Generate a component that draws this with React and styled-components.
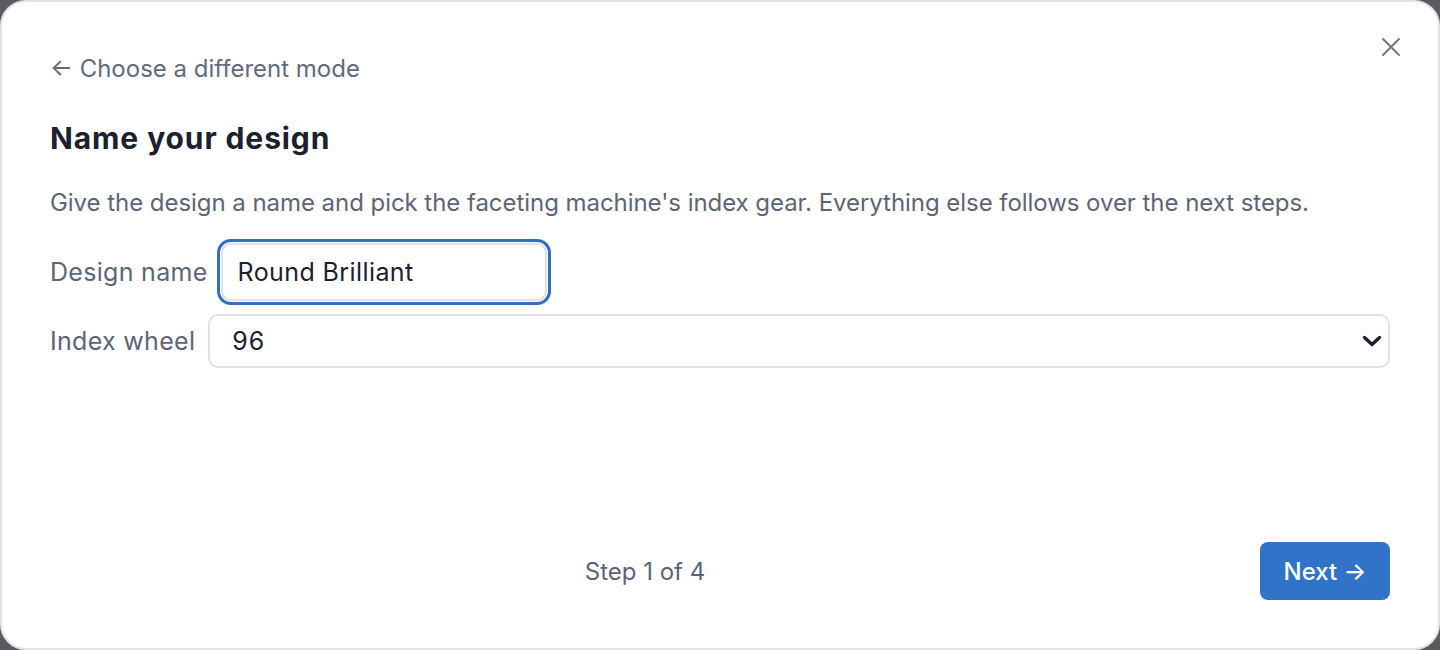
import React from "react";
import styled, { createGlobalStyle } from "styled-components";

const Global = createGlobalStyle`
  html, body { margin: 0; padding: 0; background: #5b5b5f; }
  body { font-family: Inter, "Noto Sans", sans-serif; }
  * { box-sizing: border-box; }
`;

const Modal = styled.div`
  position: relative;
  width: 1440px;
  height: 650px;
  background: #fff;
  border: 2px solid #e2e3e8;
  border-radius: 26px;
  padding: 50px 48px 48px 48px;
  display: flex;
  flex-direction: column;
  overflow: hidden;
`;

const CloseButton = styled.button`
  position: absolute;
  top: 34px;
  right: 36px;
  width: 22px;
  height: 22px;
  padding: 0;
  border: none;
  background: none;
  color: #6b7280;
  display: flex;
  align-items: center;
  justify-content: center;
  cursor: pointer;
`;

const BackLink = styled.a`
  font-size: 24px;
  line-height: 34px;
  color: #626b7b;
  text-decoration: none;
  align-self: flex-start;
`;

const Title = styled.h2`
  margin: 33px 0 0 0;
  font-size: 30px;
  line-height: 38px;
  font-weight: 700;
  color: #1b2130;
  letter-spacing: 0.9px;
`;

const Description = styled.p`
  margin: 30px 0 0 0;
  font-size: 24px;
  line-height: 32px;
  color: #5c6576;
  letter-spacing: -0.05px;
`;

const Fields = styled.div`
  margin-top: 24px;
  display: flex;
  flex-direction: column;
  gap: 13px;
`;

const Row = styled.label`
  display: flex;
  align-items: center;
  gap: 13px;
`;

const Label = styled.span`
  font-size: 25px;
  letter-spacing: 0.3px;
  color: #5c6576;
  white-space: nowrap;
`;

const TextInput = styled.input`
  width: 326px;
  height: 58px;
  padding: 0 15px;
  font-family: inherit;
  font-size: 25px;
  letter-spacing: 0.4px;
  color: #1b2130;
  border: 2px solid #dfe1e6;
  border-radius: 10px;
  outline: 3px solid #2f6ec2;
  outline-offset: 1px;
  background: #fff;
`;

const SelectWrap = styled.div`
  position: relative;
  flex: 1;
`;

const Select = styled.select`
  appearance: none;
  width: 100%;
  height: 54px;
  padding: 0 48px 0 22px;
  font-family: inherit;
  font-size: 25px;
  letter-spacing: 1px;
  color: #1b2130;
  border: 2px solid #dfe1e6;
  border-radius: 10px;
  background: #fff;
`;

const Chevron = styled.svg`
  position: absolute;
  right: 8px;
  top: 50%;
  transform: translateY(-50%);
  pointer-events: none;
`;

const Footer = styled.div`
  margin-top: auto;
  display: flex;
  align-items: center;
  gap: 22px;
`;

const StepText = styled.span`
  flex: 1;
  text-align: center;
  font-size: 24px;
  color: #5c6576;
  padding-left: 2px;
`;

const NextButton = styled.button`
  width: 130px;
  height: 58px;
  border: none;
  border-radius: 8px;
  background: #3173c9;
  color: #fff;
  font-family: inherit;
  font-size: 24px;
  font-weight: 500;
  cursor: pointer;
`;

export default function App() {
  return (
    <>
      <Global />
      <Modal>
        <CloseButton aria-label="Close">
          <svg width="18" height="18" viewBox="0 0 18 18" fill="none" stroke="currentColor" strokeWidth="1.8" strokeLinecap="round">
            <path d="M1 1 L17 17 M17 1 L1 17" />
          </svg>
        </CloseButton>
        <BackLink href="#">← Choose a different mode</BackLink>
        <Title>Name your design</Title>
        <Description>
          Give the design a name and pick the faceting machine's index gear. Everything else follows over the next steps.
        </Description>
        <Fields>
          <Row>
            <Label>Design name</Label>
            <TextInput defaultValue="Round Brilliant" />
          </Row>
          <Row>
            <Label>Index wheel</Label>
            <SelectWrap>
              <Select defaultValue="96">
                <option value="64">64</option>
                <option value="72">72</option>
                <option value="80">80</option>
                <option value="96">96</option>
                <option value="120">120</option>
              </Select>
              <Chevron width="20" height="12" viewBox="0 0 20 12" fill="none" stroke="#1b2130" strokeWidth="3.4" strokeLinecap="round" strokeLinejoin="round">
                <path d="M2.5 2.5 L10 9.5 L17.5 2.5" />
              </Chevron>
            </SelectWrap>
          </Row>
        </Fields>
        <Footer>
          <StepText>Step 1 of 4</StepText>
          <NextButton>Next →</NextButton>
        </Footer>
      </Modal>
    </>
  );
}
